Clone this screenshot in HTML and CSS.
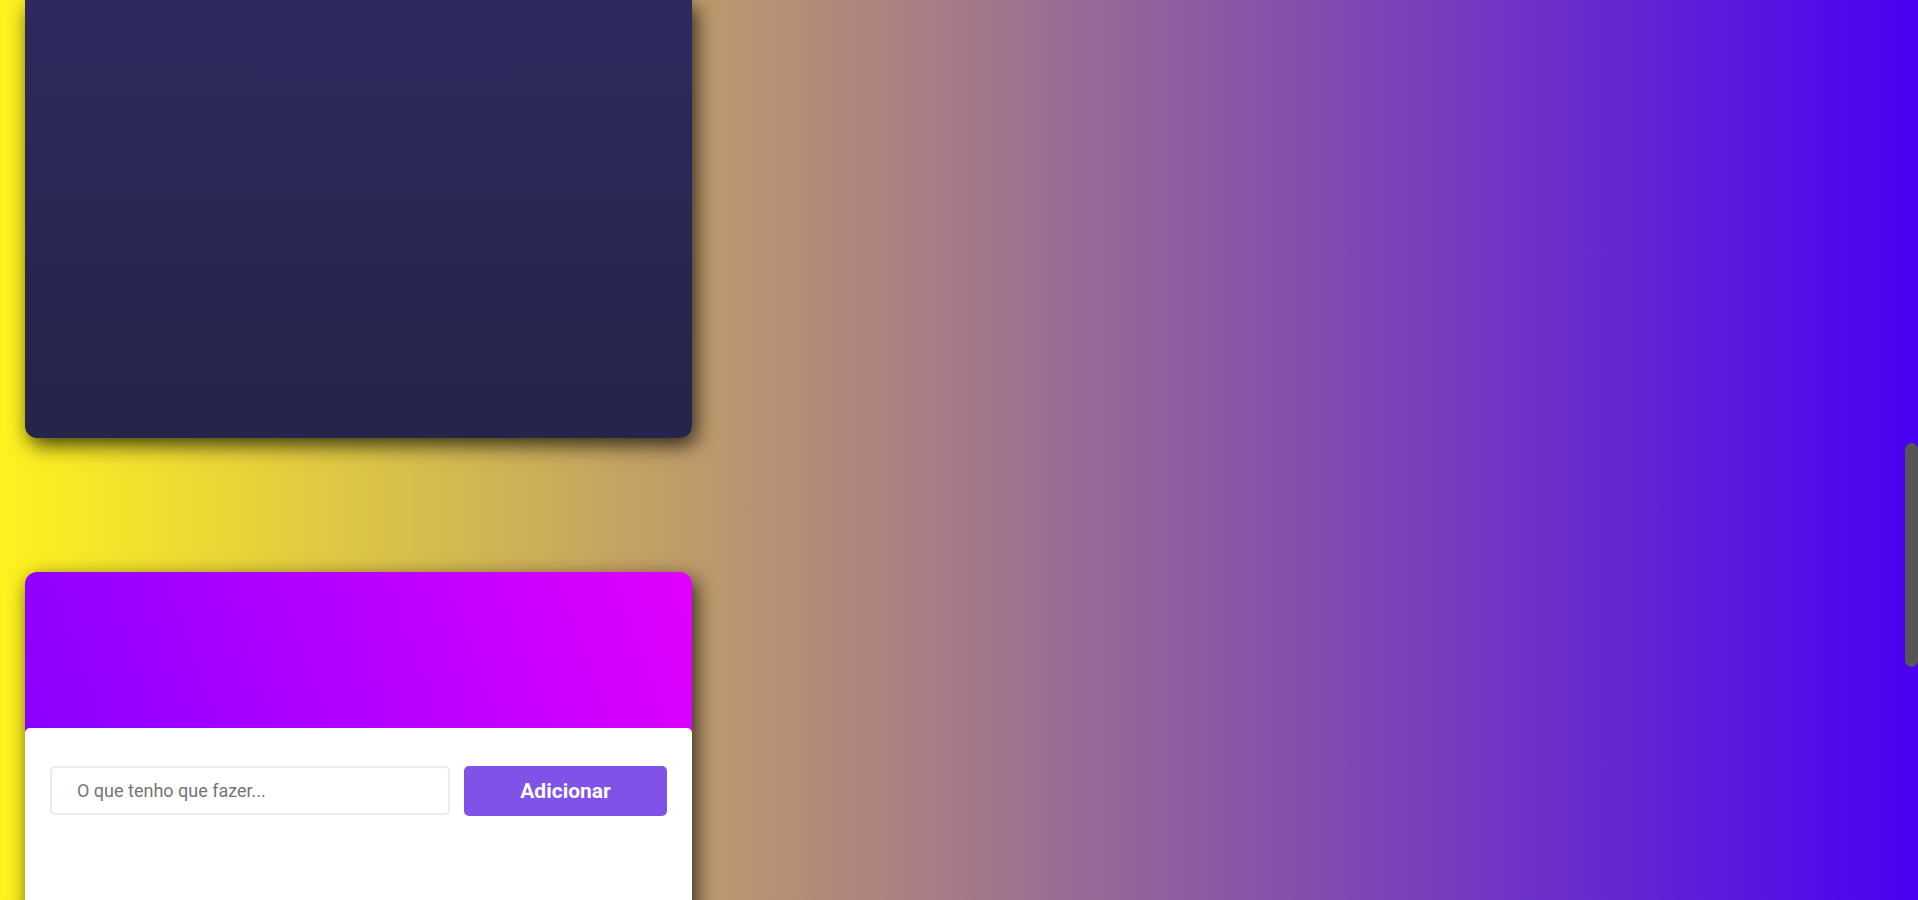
FILE: index.html
```html
<!DOCTYPE html>
<html lang="pt-BR">
<head>
<meta charset="utf-8">
<title>Tarefas</title>
<link rel="stylesheet" href="styles.css">
</head>
<body>
  <main class="column">
    <section class="dark-card"></section>
    <section class="todo-card">
      <header class="todo-header"></header>
      <div class="todo-body">
        <form class="todo-form">
          <input class="todo-input" type="text" placeholder="O que tenho que fazer...">
          <button class="todo-button" type="button">Adicionar</button>
        </form>
      </div>
    </section>
  </main>
  <div class="scroll-thumb"></div>
</body>
</html>
```
FILE: styles.css
```css
html, body {
  margin: 0;
  height: 900px;
  overflow: hidden;
}
body {
  background: linear-gradient(to right, #fff21e 0%, #4a00f2 100%);
  font-family: Roboto, "Liberation Sans", sans-serif;
}
.column {
  width: 667px;
  padding-left: 25px;
  display: flex;
  flex-direction: column;
}
.dark-card {
  height: 438px;
  border-radius: 0 0 12px 12px;
  background: linear-gradient(to bottom, #2e2a5f 0%, #252449 100%);
  box-shadow: 4px 7px 20px rgba(0, 0, 0, 0.75);
  margin-bottom: 134px;
}
.todo-card {
  border-radius: 12px 12px 0 0;
  background: linear-gradient(70deg, #7f00ff 0%, #e100ff 100%);
  box-shadow: 4px 7px 20px rgba(0, 0, 0, 0.75);
  height: 420px;
  display: flex;
  flex-direction: column;
}
.todo-header {
  height: 156px;
}
.todo-body {
  flex: 1;
  background: #fff;
  border-radius: 5px 5px 0 0;
  padding: 38px 25px 0 25px;
}
.todo-form {
  display: flex;
  gap: 14px;
  margin: 0;
}
.todo-input {
  box-sizing: border-box;
  width: 400px;
  height: 49px;
  border: 2px solid #ececec;
  border-radius: 5px;
  padding: 0 0 0 25px;
  font-family: Roboto, "Liberation Sans", sans-serif;
  font-size: 18px;
  color: #333;
  outline: none;
  background: #fff;
}
.todo-input::placeholder {
  color: #757575;
}
.todo-button {
  box-sizing: border-box;
  flex: 1;
  height: 50px;
  border: none;
  border-radius: 5px;
  background: #7f52e8;
  color: #fff;
  font-family: Roboto, "Liberation Sans", sans-serif;
  font-weight: 700;
  font-size: 21px;
}
.scroll-thumb {
  position: fixed;
  right: 0;
  top: 443px;
  width: 13px;
  height: 224px;
  background: #555;
  border-radius: 7px;
}
```
